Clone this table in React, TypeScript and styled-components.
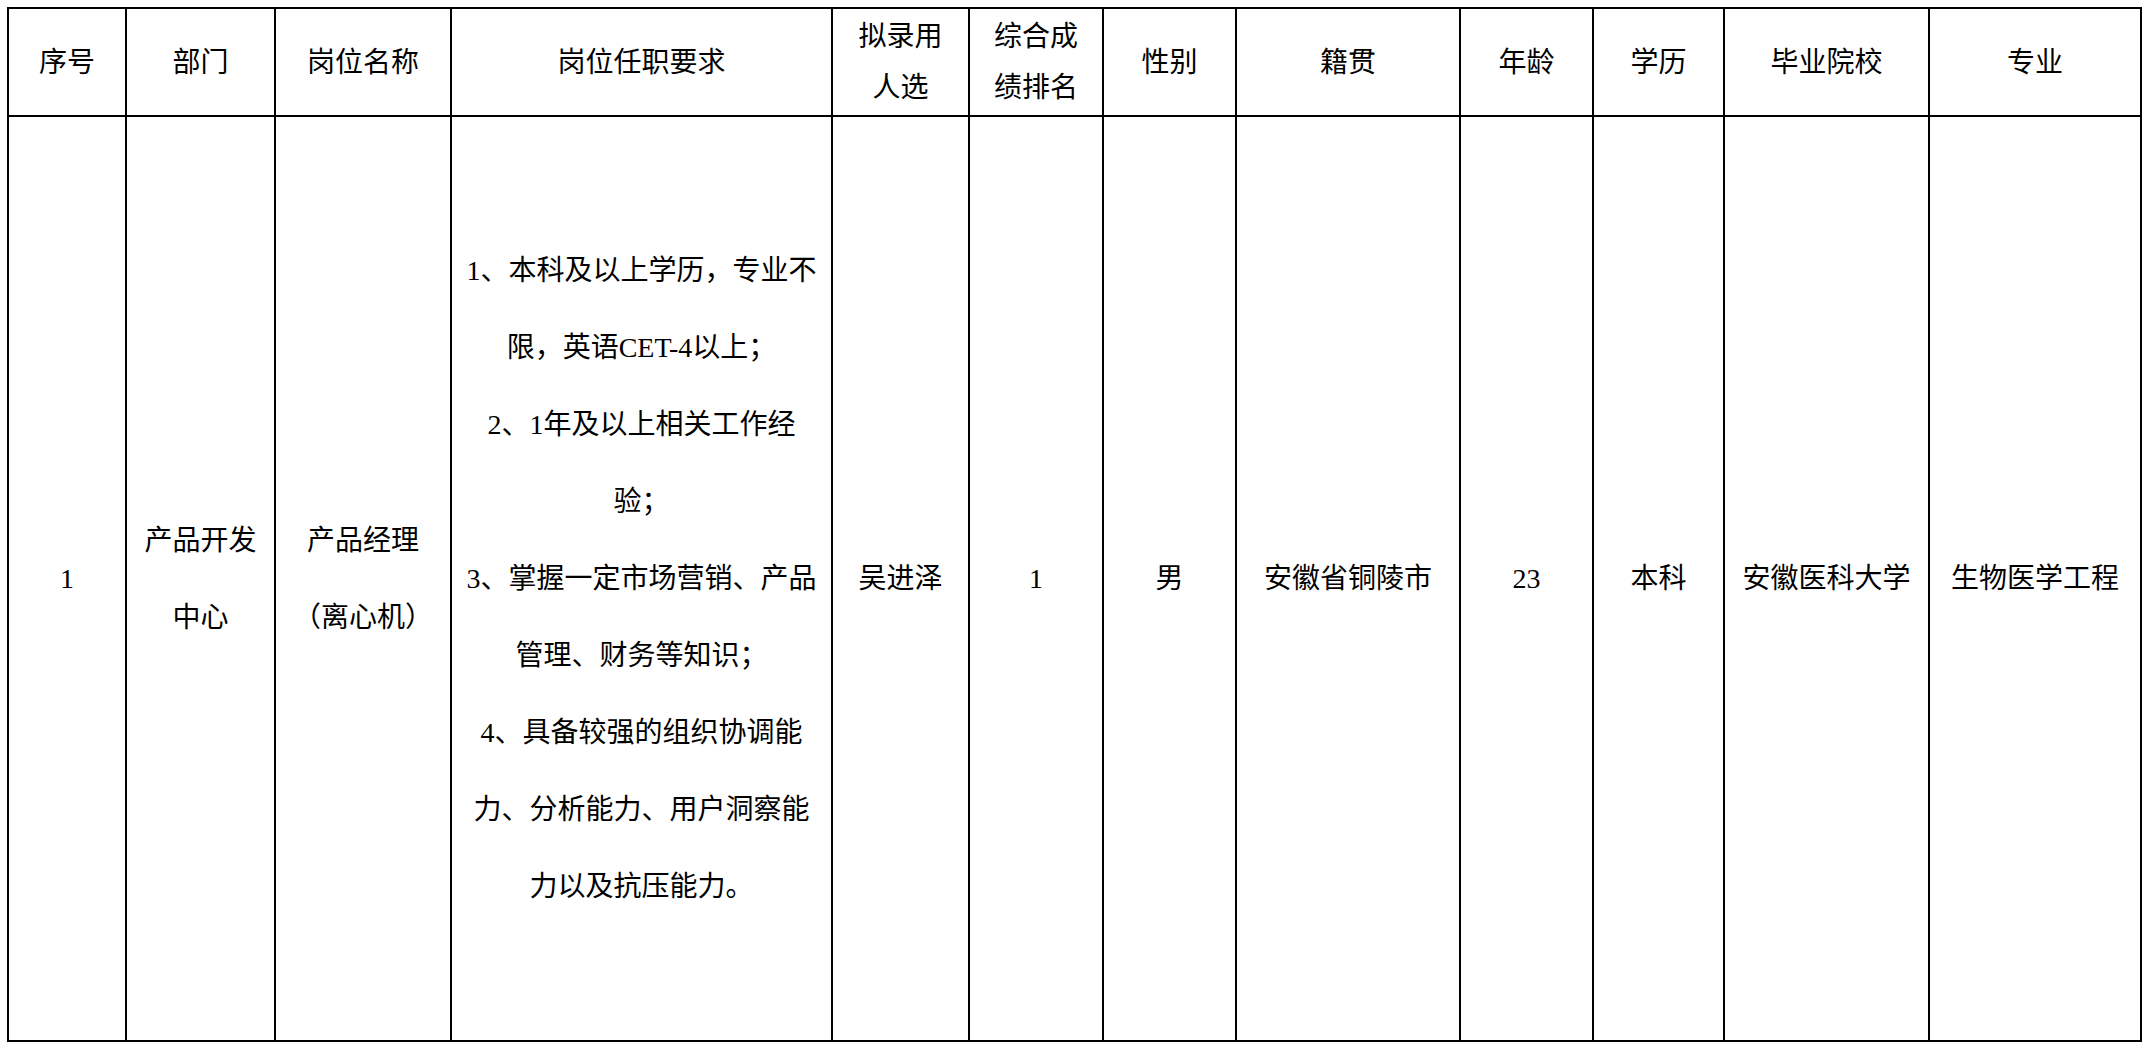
import React from "react";
import styled, { createGlobalStyle } from "styled-components";

const GlobalStyle = createGlobalStyle`
  html, body {
    margin: 0;
    padding: 0;
    background: #ffffff;
  }
  body {
    font-family: "Liberation Serif", "Noto Sans CJK SC", serif;
    color: #000000;
  }
`;

const Page = styled.div`
  padding: 7px 0 0 7px;
`;

const Table = styled.table`
  border-collapse: collapse;
  table-layout: fixed;
  width: 2133px;
  font-size: 28px;
`;

const HeadCell = styled.th`
  height: 106px;
  padding: 0 14px;
  border: 2px solid #000;
  font-weight: normal;
  line-height: 51px;
  text-align: center;
  vertical-align: middle;
`;

const BodyCell = styled.td<{ $pad?: number }>`
  height: 923px;
  padding: 0 ${(p) => p.$pad ?? 14}px;
  border: 2px solid #000;
  line-height: 77px;
  text-align: center;
  vertical-align: middle;
`;

const Requirement = styled.div`
  text-align: center;
`;

const columns = [
  { title: "序号", width: 118 },
  { title: "部门", width: 149 },
  { title: "岗位名称", width: 176 },
  { title: "岗位任职要求", width: 381 },
  { title: "拟录用人选", width: 137 },
  { title: "综合成绩排名", width: 134 },
  { title: "性别", width: 133 },
  { title: "籍贯", width: 224 },
  { title: "年龄", width: 133 },
  { title: "学历", width: 131 },
  { title: "毕业院校", width: 205 },
  { title: "专业", width: 212 },
];

const requirements = [
  "1、本科及以上学历，专业不限，英语CET-4以上；",
  "2、1年及以上相关工作经验；",
  "3、掌握一定市场营销、产品管理、财务等知识；",
  "4、具备较强的组织协调能力、分析能力、用户洞察能力以及抗压能力。",
];

const row = {
  no: "1",
  dept: "产品开发中心",
  post: "产品经理（离心机）",
  name: "吴进泽",
  rank: "1",
  gender: "男",
  origin: "安徽省铜陵市",
  age: "23",
  edu: "本科",
  school: "安徽医科大学",
  major: "生物医学工程",
};

export default function App() {
  return (
    <Page>
      <GlobalStyle />
      <Table>
        <colgroup>
          {columns.map((c) => (
            <col key={c.title} style={{ width: c.width }} />
          ))}
        </colgroup>
        <thead>
          <tr>
            {columns.map((c) => (
              <HeadCell key={c.title}>{c.title}</HeadCell>
            ))}
          </tr>
        </thead>
        <tbody>
          <tr>
            <BodyCell>{row.no}</BodyCell>
            <BodyCell>{row.dept}</BodyCell>
            <BodyCell>{row.post}</BodyCell>
            <BodyCell $pad={10}>
              {requirements.map((r) => (
                <Requirement key={r}>{r}</Requirement>
              ))}
            </BodyCell>
            <BodyCell>{row.name}</BodyCell>
            <BodyCell>{row.rank}</BodyCell>
            <BodyCell>{row.gender}</BodyCell>
            <BodyCell>{row.origin}</BodyCell>
            <BodyCell>{row.age}</BodyCell>
            <BodyCell>{row.edu}</BodyCell>
            <BodyCell>{row.school}</BodyCell>
            <BodyCell>{row.major}</BodyCell>
          </tr>
        </tbody>
      </Table>
    </Page>
  );
}
